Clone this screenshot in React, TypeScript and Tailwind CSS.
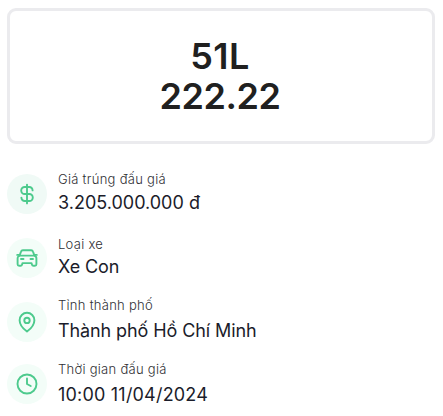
import React from 'react'

interface DetailRowProps {
  icon: React.ReactNode
  label: string
  value: string
  iconClassName?: string
  textClassName?: string
  labelClassName?: string
  valueClassName?: string
}

const DetailRow: React.FC<DetailRowProps> = ({
  icon,
  label,
  value,
  iconClassName = 'bg-[#f3fdf8]',
  textClassName = 'h-11',
  labelClassName = '',
  valueClassName = ''
}) => {
  return (
    <div className="flex h-10 items-center">
      <div
        className={`flex h-10 w-10 shrink-0 items-center justify-center rounded-full text-[#4dca8d] ${iconClassName}`}
      >
        {icon}
      </div>
      <div className={`ml-[11px] flex flex-col justify-end whitespace-nowrap ${textClassName}`}>
        <div className={`text-[13px] font-light leading-5 tracking-[0.28px] text-[#303035] ${labelClassName}`}>
          {label}
        </div>
        <div className={`text-[18px] leading-[26px] text-[#1b1c2a] ${valueClassName}`}>{value}</div>
      </div>
    </div>
  )
}

const iconProps = {
  width: 24,
  height: 24,
  viewBox: '0 0 24 24',
  fill: 'none',
  stroke: 'currentColor',
  strokeWidth: 1.9,
  strokeLinecap: 'round' as const,
  strokeLinejoin: 'round' as const
}

const DollarIcon = () => (
  <svg {...iconProps}>
    <path d="M12 2.6v18.8M17.6 8.4c0-1.9-1.4-3.4-3.3-3.4H9.7a3.5 3.5 0 0 0 0 7h4.6a3.5 3.5 0 0 1 0 7H9.7c-1.9 0-3.3-1.5-3.3-3.4" />
  </svg>
)

const CarIcon = () => (
  <svg {...iconProps}>
    <path d="M4.6 9.5 6 5.6c.3-.9 1-1.4 1.9-1.4h8.2c.9 0 1.6.5 1.9 1.4l1.4 3.9" />
    <path d="M2.2 8.9h2.2M19.6 8.9h2.2" />
    <path d="M5.2 9.6h13.6a2.6 2.6 0 0 1 2.6 2.6v6c0 .9-.6 1.5-1.5 1.5h-1.5c-.9 0-1.3-.5-1.5-1.2l-.4-1.4h-9l-.4 1.4c-.2.7-.6 1.2-1.5 1.2H4.1c-.9 0-1.5-.6-1.5-1.5v-6a2.6 2.6 0 0 1 2.6-2.6Z" />
    <path d="M6 13h2.5M15.5 13H18" />
  </svg>
)

const PinIcon = () => (
  <svg {...iconProps}>
    <path d="M12 21.6c-2.4-1.8-7.4-6.4-7.4-11.4a7.4 7.4 0 0 1 14.8 0c0 5-5 9.6-7.4 11.4Z" />
    <circle cx="12" cy="10.4" r="2.7" />
  </svg>
)

const ClockIcon = () => (
  <svg {...iconProps}>
    <circle cx="12" cy="12" r="9.5" />
    <path d="M12 6.4V12l3.7 2" />
  </svg>
)

export default function App() {
  return (
    <div className="h-[416px] w-[443px] overflow-hidden bg-white pl-[7px] pt-2 font-['Inter','Noto_Sans',sans-serif]">
      {/* License plate */}
      <div className="flex h-[136px] w-[428px] flex-col items-center justify-center rounded-[9px] border-3 border-[#ebebee] pr-0.5 text-[36px] font-semibold leading-10 text-[#202020]">
        <div className="tracking-[0.4px]">51L</div>
        <div className="tracking-[-0.4px]">222.22</div>
      </div>

      {/* Auction details */}
      <div className="mt-[30px]">
        <DetailRow icon={<DollarIcon />} label="Giá trúng đấu giá" value="3.205.000.000 đ" iconClassName="bg-[#f0faf6]" labelClassName="pb-px" />
        <div className="h-6" />
        <DetailRow icon={<CarIcon />} label="Loại xe" value="Xe Con" valueClassName="tracking-[-0.1px]" />
        <div className="h-6" />
        <DetailRow icon={<PinIcon />} label="Tỉnh thành phố" value="Thành phố Hồ Chí Minh" labelClassName="pb-[3px]" valueClassName="tracking-[-0.1px]" />
        <div className="h-[22px]" />
        <DetailRow icon={<ClockIcon />} label="Thời gian đấu giá" value="10:00 11/04/2024" textClassName="h-12" labelClassName="pb-[3px]" valueClassName="tracking-[0.2px]" />
      </div>
    </div>
  )
}
